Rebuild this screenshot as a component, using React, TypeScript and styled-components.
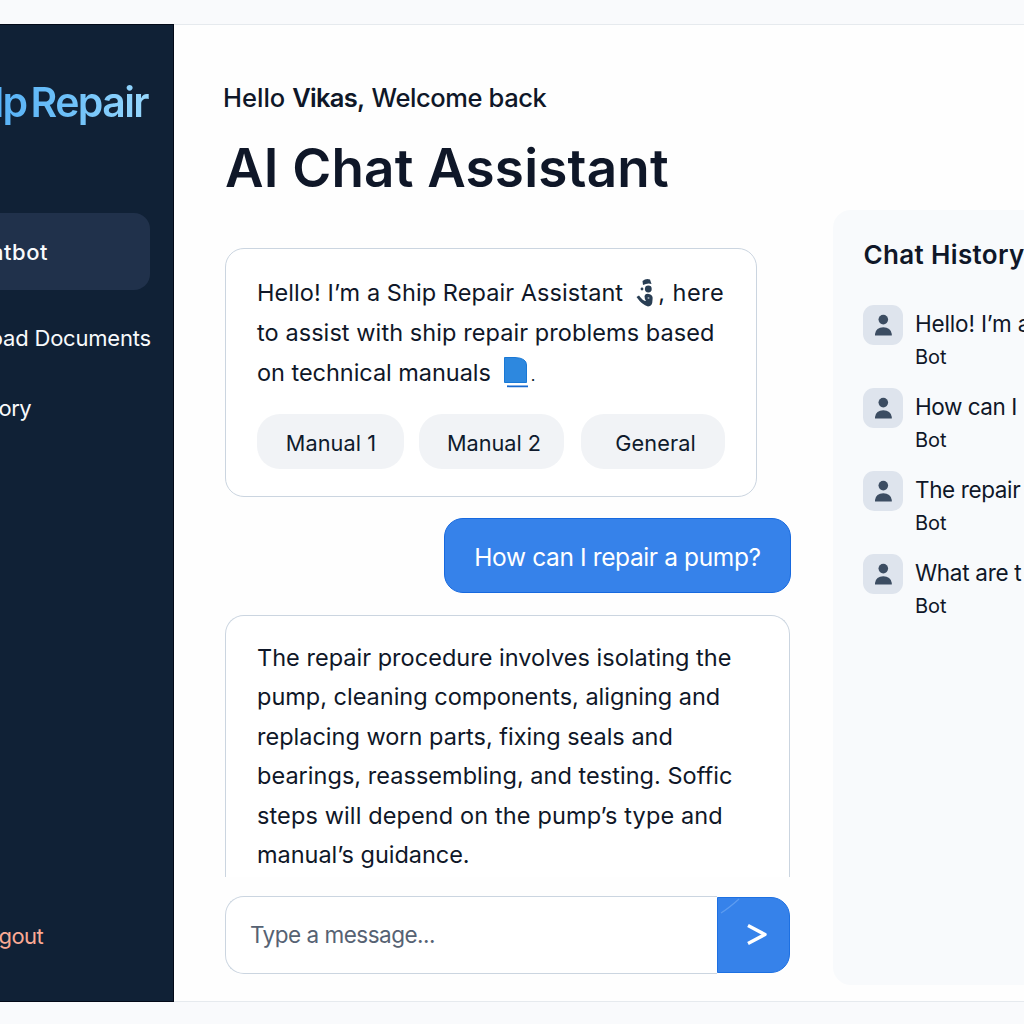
import React from "react";
import styled, { createGlobalStyle } from "styled-components";

const Global = createGlobalStyle`
  *, *::before, *::after { box-sizing: border-box; }
  body { margin: 0; background: #f9fafc; }
`;

const Page = styled.div`
  width: 1024px;
  height: 1024px;
  padding: 24px 0 22px;
  overflow: hidden;
  background: #f9fafc;
  color: #0f1728;
  font-family: Inter, "Liberation Sans", sans-serif;
`;

const Shell = styled.div`
  display: flex;
  height: 978px;
  background: #fefefe;
`;

const Sidebar = styled.aside`
  display: flex;
  flex-direction: column;
  flex: none;
  width: 174px;
  overflow: hidden;
  background: #102136;
  border: solid #030a18;
  border-width: 1px 1px 1px 0;
`;

const Logo = styled.div`
  display: flex;
  justify-content: flex-end;
  gap: 4px;
  height: 50px;
  margin: 51.5px 23px 0 0;
  padding-right: 2px;
  font-size: 41px;
  font-weight: 600;
  line-height: 50px;
  letter-spacing: -1.6px;
  white-space: nowrap;
  color: transparent;
  background: linear-gradient(90deg, #58b2f6 0%, #6dc0f9 45%, #98d8fd 100%);
  -webkit-background-clip: text;
  background-clip: text;
`;

const Nav = styled.nav`
  display: flex;
  flex-direction: column;
  margin-top: 86.5px;
`;

const NavItem = styled.a<{ $active?: boolean; $height: number; $inset: number; $track?: number }>`
  display: flex;
  align-items: center;
  justify-content: flex-end;
  height: ${(p) => p.$height}px;
  margin-right: ${(p) => (p.$active ? 23 : 0)}px;
  margin-bottom: ${(p) => (p.$active ? 13 : 0)}px;
  padding-right: ${(p) => p.$inset}px;
  border-radius: 0 16px 16px 0;
  background: ${(p) => (p.$active ? "#20314b" : "transparent")};
  color: #f8fafc;
  font-size: 22px;
  font-weight: ${(p) => (p.$active ? 500 : 400)};
  letter-spacing: ${(p) => p.$track ?? 0}px;
  white-space: nowrap;
`;

const Logout = styled(NavItem)`
  margin-top: auto;
  margin-bottom: 45px;
  color: #fbaa94;
`;

const Main = styled.main`
  display: flex;
  flex: 1;
  min-width: 0;
  padding-left: 51px;
  border: solid #e6eaee;
  border-width: 1px 0;
`;

const Conversation = styled.section`
  display: flex;
  flex-direction: column;
  flex: none;
  width: 566px;
`;

const Greeting = styled.p`
  display: flex;
  gap: 7px;
  margin: 56px 0 0 -2px;
  font-size: 25.5px;
  line-height: 34px;
  white-space: nowrap;
`;

const Word = styled.span<{ $weight?: number; $track: number }>`
  font-weight: ${(p) => p.$weight ?? 400};
  letter-spacing: ${(p) => p.$track}px;
`;

const Title = styled.h1`
  margin: 21px 0 0;
  font-size: 53px;
  font-weight: 600;
  line-height: 64px;
  letter-spacing: 0.2px;
  white-space: nowrap;
`;

const BotCard = styled.article<{ $width: number; $height: number; $open?: boolean }>`
  flex: none;
  width: ${(p) => p.$width}px;
  height: ${(p) => p.$height}px;
  padding: ${(p) => (p.$open ? 22 : 24)}px 31px 0;
  overflow: hidden;
  background: #fff;
  border: 1px solid #cbd5e0;
  border-bottom-width: ${(p) => (p.$open ? 0 : 1)}px;
  border-radius: ${(p) => (p.$open ? "19px 19px 0 0" : "19px")};
`;

const Welcome = styled(BotCard)`
  margin-top: 48px;
`;

const Line = styled.div<{ $track?: number; $height?: number }>`
  display: flex;
  font-size: 23.5px;
  line-height: ${(p) => p.$height ?? 39.45}px;
  letter-spacing: ${(p) => p.$track ?? 0}px;
  white-space: nowrap;
`;

const AnchorMark = styled.svg`
  flex: none;
  width: 20px;
  height: 30px;
  margin: 5px 3px 0 12px;
`;

const BookMark = styled.svg`
  flex: none;
  width: 28px;
  height: 32px;
  margin: 3px 2px 0 10px;
`;

const Stop = styled.span`
  font-size: 16px;
  padding-top: 3px;
`;

const Chips = styled.div`
  display: flex;
  height: 55px;
  margin-top: 19px;
`;

const Chip = styled.button<{ $width: number; $before?: number; $shift?: number; $track?: number }>`
  flex: none;
  width: ${(p) => p.$width}px;
  margin: 0 0 0 ${(p) => p.$before ?? 0}px;
  padding: 2px 0 0 ${(p) => p.$shift ?? 0}px;
  border: 0;
  border-radius: 23px;
  background: #f1f3f6;
  color: #0f1b2d;
  font: 400 21.7px Inter, "Liberation Sans", sans-serif;
  letter-spacing: ${(p) => p.$track ?? 0}px;
`;

const UserBubble = styled.div`
  display: flex;
  align-items: center;
  justify-content: center;
  align-self: flex-end;
  flex: none;
  width: 347px;
  height: 75px;
  margin: 21px 0 22px;
  padding-top: 2px;
  border: 1px solid #1769df;
  border-radius: 19px;
  background: #3682ea;
  color: #fff;
  font-size: 24.5px;
  letter-spacing: -0.38px;
  white-space: nowrap;
`;

const Composer = styled.form`
  display: flex;
  flex: none;
  width: 565px;
  height: 78px;
  margin: 19px 0 0;
`;

const Field = styled.input`
  flex: 1;
  min-width: 0;
  padding: 0 0 2px 24px;
  border: 1px solid #cbd5e0;
  border-right: 0;
  border-radius: 19px 0 0 19px;
  outline: 0;
  background: #fff;
  font: 400 22.5px Inter, "Liberation Sans", sans-serif;
  letter-spacing: -0.5px;
  &::placeholder { color: #566273; opacity: 1; }
`;

const Send = styled.button`
  flex: none;
  width: 73px;
  height: 76px;
  margin-top: 1px;
  padding: 0;
  border: 1px solid #1d70e2;
  border-radius: 0 19px 19px 0;
  background: #3682ea;
  svg { display: block; }
`;

const History = styled.aside`
  flex: none;
  width: 191px;
  height: 775px;
  margin: 184.5px 0 0 42px;
  padding: 29px 0 0 30px;
  overflow: hidden;
  border-radius: 18px 0 0 18px;
  background: #f8fafc;
`;

const HistoryTitle = styled.h2`
  margin: 0;
  font-size: 26px;
  font-weight: 600;
  line-height: 32px;
  letter-spacing: 0.35px;
  text-indent: 0.5px;
  white-space: nowrap;
`;

const HistoryRow = styled.div<{ $first?: boolean }>`
  display: flex;
  gap: 12px;
  height: 83.3px;
  margin-top: ${(p) => (p.$first ? 33.5 : 0)}px;
`;

const Avatar = styled.div`
  flex: none;
  width: 40px;
  height: 40px;
  margin-top: 0.6px;
  border-radius: 11px;
  background: #dee4ed;
  svg { display: block; }
`;

const Entry = styled.div`
  padding-top: 3.5px;
  white-space: nowrap;
`;

const Preview = styled.div<{ $track: number }>`
  font-size: 22.5px;
  line-height: 32px;
  letter-spacing: ${(p) => p.$track}px;
`;

const Sender = styled.div`
  font-size: 20px;
  line-height: 34px;
`;

const history: [string, number][] = [
  ["Hello! I’m a", -0.16],
  ["How can I", -0.45],
  ["The repair", -0.38],
  ["What are t", -0.3],
];

const reply: [string, number][] = [
  ["The repair procedure involves isolating the", 0.02],
  ["pump, cleaning components, aligning and", -0.01],
  ["replacing worn parts, fixing seals and", 0],
  ["bearings, reassembling, and testing. Soffic", 0.03],
  ["steps will depend on the pump’s type and", 0.12],
  ["manual’s guidance.", -0.03],
];

export default function App() {
  return (
    <Page>
      <Global />
      <Shell>
        <Sidebar>
          <Logo>
            <span>lp</span>
            <span>Repair</span>
          </Logo>
          <Nav>
            <NavItem $active $height={77} $inset={102} $track={0.5}>Chatbot</NavItem>
            <NavItem $height={70} $inset={22} $track={-0.2}>Upload Documents</NavItem>
            <NavItem $height={70} $inset={142} $track={-0.6}>History</NavItem>
          </Nav>
          <Logout $height={40} $inset={130} $track={-0.6}>Logout</Logout>
        </Sidebar>
        <Main>
          <Conversation>
            <Greeting>
              <Word $weight={450} $track={0}>Hello</Word>
              <Word $weight={600} $track={-0.7}>Vikas,</Word>
              <Word $weight={450} $track={-0.4}>Welcome back</Word>
            </Greeting>
            <Title>AI Chat Assistant</Title>
            <Welcome $width={532} $height={249}>
              <Line $track={0.07} $height={39.8}>
                Hello! I’m a Ship Repair Assistant
                <AnchorMark viewBox="0 0 20 30" fill="#293e54">
                  <path d="M7.5 3Q11 0 15 1.5L16.5 6Q13 4.5 8 7Z" />
                  <circle cx="13.3" cy="11" r="3.4" />
                  <circle cx="7" cy="11" r="1.4" />
                  <path d="M9.5 18Q10.5 15 14 16Q18.5 17 17.5 22Q17.5 28.5 13 28.5Q7 27 1.5 19L4 17.5Q8 23 11 23Q9.5 21 9.5 18Z" />
                  <circle cx="13.5" cy="20" r="1" fill="#9aa8b6" />
                </AnchorMark>
                <Word $track={0.5}>, here</Word>
              </Line>
              <Line $track={0.075} $height={39.8}>to assist with ship repair problems based</Line>
              <Line $track={-0.04} $height={39.8}>
                on technical manuals
                <BookMark viewBox="0 0 28 32">
                  <path d="M3.5 1.5H14Q25.5 2 25.5 9V26.5H3.5Z" fill="#2d88df" stroke="#1978d5" />
                  <path d="M6 30.3H27" stroke="#1769cf" strokeWidth="1.8" />
                </BookMark>
                <Stop>.</Stop>
              </Line>
              <Chips>
                <Chip $width={147} $shift={1} $track={0.1}>Manual 1</Chip>
                <Chip $width={145} $before={15} $shift={5}>Manual 2</Chip>
                <Chip $width={144} $before={17} $shift={5} $track={0.1}>General</Chip>
              </Chips>
            </Welcome>
            <UserBubble>How can I repair a pump?</UserBubble>
            <BotCard $width={565} $height={262} $open>
              {reply.map(([text, track]) => (
                <Line key={text} $track={track}>{text}</Line>
              ))}
            </BotCard>
            <Composer onSubmit={(e) => e.preventDefault()}>
              <Field placeholder="Type a message..." />
              <Send type="submit" aria-label="Send">
                <svg width="71" height="74" viewBox="0 0 71 74" fill="none">
                  <path d="M3 15Q11 10 21 1" stroke="#5d9cf0" strokeWidth="1.2" />
                  <path d="M30 27.5L47 36.5L30 45.5" stroke="#fff" strokeWidth="3.4" strokeLinejoin="round" />
                </svg>
              </Send>
            </Composer>
          </Conversation>
          <History>
            <HistoryTitle>Chat History</HistoryTitle>
            {history.map(([text, track], i) => (
              <HistoryRow key={text} $first={i === 0}>
                <Avatar>
                  <svg width="40" height="40" viewBox="0 0 40 40" fill="#3c4d62">
                    <circle cx="20.3" cy="14.6" r="4.8" />
                    <path d="M12 30.6V29Q13 22.3 20.3 22.3T28.8 29V30.6Z" />
                  </svg>
                </Avatar>
                <Entry>
                  <Preview $track={track}>{text}</Preview>
                  <Sender>Bot</Sender>
                </Entry>
              </HistoryRow>
            ))}
          </History>
        </Main>
      </Shell>
    </Page>
  );
}
